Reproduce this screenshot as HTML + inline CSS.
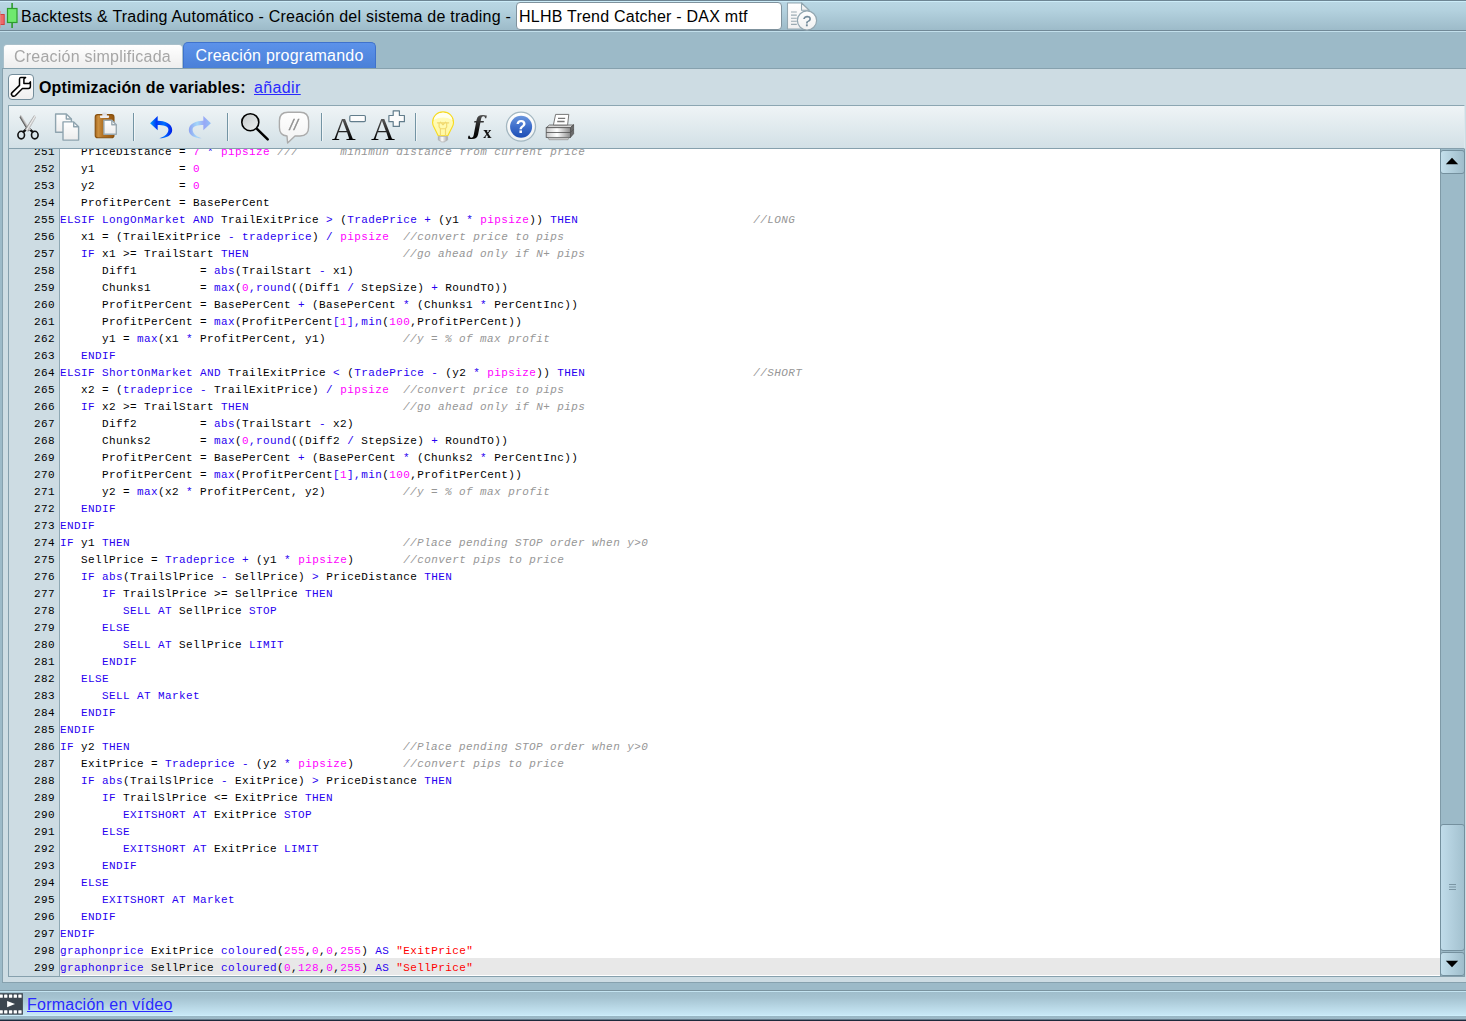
<!DOCTYPE html>
<html lang="es">
<head>
<meta charset="utf-8">
<title>Backtests &amp; Trading Automático</title>
<style>
html,body{margin:0;padding:0;}
body{width:1466px;height:1021px;overflow:hidden;position:relative;background:#9cbac8;font-family:"Liberation Sans",sans-serif;font-size:16px;color:#000;letter-spacing:0.23px;}
.abs{position:absolute;}
#titlebar{left:0;top:0;width:1466px;height:31px;background:linear-gradient(#bad7e4 0,#b4d2df 30%,#9dbbc9 100%);border-top:1px solid #6d8593;border-bottom:1px solid #718997;box-sizing:border-box;}
#titlebar .hl{left:0;top:0;width:100%;height:1px;background:#ccecf8;}
#title{left:21px;top:7px;font-size:16px;line-height:20px;white-space:nowrap;}
#name{left:516px;top:2px;width:266px;height:28px;box-sizing:border-box;border:1px solid #7f929d;border-radius:4px;background:#fff;font-size:16px;line-height:27px;padding-left:2px;white-space:nowrap;}
#band1hl{left:0;top:31px;width:1466px;height:1px;background:#c2dfeb;}
.tab{box-sizing:border-box;font-size:16px;white-space:nowrap;text-align:center;}
#tab1{left:3px;top:44px;width:180px;height:24px;background:linear-gradient(#ffffff,#eeeeee);border:1px solid #a9c0cb;border-bottom:none;border-radius:4px 4px 0 0;color:#a6a6a6;line-height:23px;text-align:left;padding-left:10px;will-change:transform;}
#tab2{left:183px;top:42px;width:193px;height:26px;background:linear-gradient(#5c92ea,#4a80d8);border:1px solid #3f72cc;border-bottom:none;border-radius:5px 5px 0 0;color:#fff;line-height:25px;}
#panel{left:2px;top:68px;width:1470px;height:915px;box-sizing:border-box;background:#cddce3;border:1px solid #86a1ae;}
#wrench{left:8px;top:74px;width:26px;height:26px;box-sizing:border-box;border:1px solid #748d9b;border-radius:4px;background:linear-gradient(#ffffff,#efefef);}
#opt{left:39px;top:78px;letter-spacing:0.15px;font-size:16px;font-weight:bold;line-height:20px;white-space:nowrap;}
#add{left:254px;top:78px;letter-spacing:.38px;font-size:16px;line-height:20px;color:#2a2aff;text-decoration:underline;white-space:nowrap;}
#toolbar{left:8px;top:105px;width:1457px;height:44px;box-sizing:border-box;border:1px solid #8ca6b2;border-bottom-color:#86a0ad;border-right-color:#dde8ed;background:linear-gradient(#eff4f6,#d2e0e6);}
.sep{width:1px;height:28px;top:113px;background:#7394a4;box-shadow:1px 0 0 rgba(255,255,255,.55);}
#editor{left:8px;top:149px;width:1457px;height:828px;box-sizing:border-box;border:1px solid #86a0ad;border-top:none;border-right:none;background:#fff;overflow:hidden;}
#gutter{left:0;top:0;width:50px;height:827px;background:#cddce3;border-right:1px solid #8ea8b4;}
.mono{font-family:"Liberation Mono",monospace;font-size:11px;letter-spacing:0.4px;line-height:21px;white-space:pre;}
#gutter .nums{left:0;top:-7px;width:46px;text-align:right;}
#gutter .nums div{height:17px;}
#code{left:51px;top:-7px;width:1381px;}
#code div{height:17px;}
#code .cur{background:#e8e8e8;}
.k{color:#2800f0;}
.m{color:#ff00ff;}
.c{color:#969696;font-style:italic;}
.s{color:#ff0000;}
#sb{left:1431px;top:0;width:25px;height:827px;box-sizing:border-box;background:#9cbac8;border-left:1px solid #7f9aa7;border-right:1px solid #7f9aa7;}
.sbtn{left:-1px;width:25px;box-sizing:border-box;border:1px solid #74909e;border-radius:3px;background:linear-gradient(90deg,#c3dfec,#9fbdcb);}
#band2{left:0;top:983px;width:1466px;height:7px;background:#9cbac8;}
#footer{left:0;top:990px;width:1466px;height:26px;box-sizing:border-box;border-top:1px solid #7a939f;border-bottom:1px solid #cdeefb;background:linear-gradient(#c4e4f1 0,#c4e4f1 1px,#9fbdcb 1px,#a6c4d2 30%,#c8e8f6 100%);}
#footend{left:0;top:1016px;width:1466px;height:5px;background:linear-gradient(#98b6c4 0,#9cbac8 2.6px,#6f8796 3.4px,#1c2a3c 4.2px,#1c2a3c 5px);}
#video{left:27px;top:995px;font-size:16px;line-height:20px;color:#2a2aff;text-decoration:underline;white-space:nowrap;}
</style>
</head>
<body>
<div id="titlebar" class="abs"><div class="hl abs"></div></div>
<div id="band1hl" class="abs"></div>
<svg class="abs" style="left:0px;top:0px;will-change:transform" width="20" height="31" viewBox="0 0 20 31" >
<rect x="-1" y="14.5" width="5.2" height="10" fill="#ee6868" stroke="#d04040" stroke-width="1"/>
<rect x="0" y="11" width="1" height="17" fill="#e08a8a" opacity=".6"/>
<rect x="11.3" y="3" width="1.6" height="25" fill="#2c9c2c"/>
<rect x="7.5" y="8.5" width="9.5" height="14" fill="#6fe96f" stroke="#2c9c2c" stroke-width="1.2"/>
</svg>
<div id="title" class="abs">Backtests &amp; Trading Automático - Creación del sistema de trading -</div>
<div id="name" class="abs">HLHB Trend Catcher - DAX mtf</div>
<svg class="abs" style="left:785px;top:0px;will-change:transform" width="36" height="33" viewBox="785 0 36 33" >
<defs><linearGradient id="dg" x1="0" y1="0" x2="0" y2="1"><stop offset="0" stop-color="#ffffff"/><stop offset="1" stop-color="#f0f0f0"/></linearGradient></defs>
<path d="M787.5 3 H801.5 L809 10.2 V29 H787.5 Z" fill="url(#dg)" stroke="#93a7b1" stroke-width="1.1" stroke-linejoin="round"/>
<path d="M801.5 3 V10.2 H809 Z" fill="#f2f2f2" stroke="#93a7b1" stroke-width="1.1" stroke-linejoin="round"/>
<path d="M791 12 H796.8 M791 15.1 H796.8 M791 18.2 H796.8 M791 21.3 H796.8 M791 24.4 H796.8" stroke="#9aaab2" stroke-width="1.1"/>
<circle cx="807" cy="20.5" r="9.6" fill="url(#dg)" stroke="#93a7b1" stroke-width="1.2"/>
<text x="807" y="26.4" text-anchor="middle" font-family="Liberation Sans, sans-serif" font-size="15.5" letter-spacing="0" fill="#6f8797" stroke="#6f8797" stroke-width=".3">?</text>
</svg>
<div id="tab1" class="abs tab">Creación simplificada</div>
<div id="tab2" class="abs tab">Creación programando</div>
<div id="panel" class="abs"></div>
<div id="wrench" class="abs"><svg class="abs" style="left:-1px;top:-1px" width="26" height="26" viewBox="0 0 26 26"><path d="M12.6 3.4 H17.6 L15.9 5 V9.6 H21.2 L22.4 7.9 V12.3 Q22.4 14.5 20.4 14.5 H14.4 L7.5 21.5 Q5.7 23.1 4.1 21.6 Q2.7 20.1 4.1 18.6 L11.5 11.4 V5.2 Q11.5 3.4 12.6 3.4 Z" fill="#fff" stroke="#000" stroke-width="1.5" stroke-linejoin="round"/></svg></div>
<div id="opt" class="abs">Optimización de variables:</div>
<div id="add" class="abs">añadir</div>
<div id="toolbar" class="abs"></div>
<div class="sep abs" style="left:133px"></div>
<div class="sep abs" style="left:227px"></div>
<div class="sep abs" style="left:321px"></div>
<div class="sep abs" style="left:415px"></div>
<svg class="abs" style="left:14px;top:110px;will-change:transform" width="30" height="34" viewBox="14 110 30 34" >
<defs>
<linearGradient id="bl1" x1="23.8" y1="124.4" x2="26.8" y2="122.6" gradientUnits="userSpaceOnUse"><stop offset="0" stop-color="#3c3c3c"/><stop offset=".5" stop-color="#b8b8b8"/><stop offset="1" stop-color="#f2f2f2"/></linearGradient>
<linearGradient id="bl2" x1="29.4" y1="122.5" x2="32.2" y2="124.2" gradientUnits="userSpaceOnUse"><stop offset="0" stop-color="#8a8a8a"/><stop offset=".45" stop-color="#f0f0f0"/><stop offset="1" stop-color="#a8a8a8"/></linearGradient>
</defs>
<path d="M23.4 131.8 L27 128.6 M32.6 131.8 L29 128.6" stroke="#111" stroke-width="2.3" stroke-linecap="round"/>
<path d="M20.2 115 L21.6 115.4 L31 129.6 L28 131.5 L19.7 117.4 Z" fill="url(#bl1)"/>
<path d="M35.4 115.2 L35.9 117.6 L27.8 131.4 L24.9 129.5 L34 115.6 Z" fill="url(#bl2)"/>
<ellipse cx="21.2" cy="135.1" rx="3.3" ry="3.8" fill="none" stroke="#111" stroke-width="1.6"/>
<ellipse cx="34.8" cy="135.1" rx="3.3" ry="3.8" fill="none" stroke="#111" stroke-width="1.6"/>
</svg><svg class="abs" style="left:52px;top:110px;will-change:transform" width="30" height="34" viewBox="52 110 30 34" >
<defs><linearGradient id="pg" x1="0" y1="0" x2="0" y2="1"><stop offset="0" stop-color="#ffffff"/><stop offset="1" stop-color="#ececec"/></linearGradient></defs>
<path d="M55.6 114 H66.3 L71.4 119 V132.2 H55.6 Z" fill="url(#pg)" stroke="#8fa4af" stroke-width="1.4" stroke-linejoin="round"/>
<path d="M66.3 114 V119 H71.4" fill="none" stroke="#8fa4af" stroke-width="1.4" stroke-linejoin="round"/>
<path d="M63 121.9 H73.7 L78.6 126.8 V140.1 H63 Z" fill="url(#pg)" stroke="#8fa4af" stroke-width="1.4" stroke-linejoin="round"/>
<path d="M73.7 121.9 V126.8 H78.6" fill="none" stroke="#8fa4af" stroke-width="1.4" stroke-linejoin="round"/>
</svg><svg class="abs" style="left:92px;top:110px;will-change:transform" width="28" height="32" viewBox="92 110 28 32" >
<defs>
<linearGradient id="cb" x1="0" y1="0" x2="1" y2="0"><stop offset="0" stop-color="#a4641a"/><stop offset=".16" stop-color="#cc9040"/><stop offset=".4" stop-color="#b27224"/><stop offset="1" stop-color="#96560e"/></linearGradient>
<linearGradient id="pg2" x1="0" y1="0" x2="0" y2="1"><stop offset="0" stop-color="#ffffff"/><stop offset="1" stop-color="#ececec"/></linearGradient>
</defs>
<rect x="95.2" y="114.6" width="18.8" height="23.2" rx="2.6" fill="url(#cb)" stroke="#87500f" stroke-width="1.1"/>
<rect x="102.3" y="112.6" width="4.6" height="4.4" rx="1.2" fill="#dedfe3"/>
<rect x="99.9" y="115.6" width="9.2" height="2.3" rx=".8" fill="#ededf0"/>
<path d="M103.9 120.3 H111.8 L116.3 124.7 V134.2 H103.9 Z" fill="url(#pg2)" stroke="#9aa9b1" stroke-width="1.4" stroke-linejoin="round"/>
<path d="M111.8 120.3 V124.7 H116.3" fill="none" stroke="#9aa9b1" stroke-width="1.4" stroke-linejoin="round"/>
</svg><svg class="abs" style="left:147px;top:112px;will-change:transform" width="70" height="30" viewBox="147 112 70 30" >
<defs>
<linearGradient id="ug" x1="150" y1="0" x2="173" y2="0" gradientUnits="userSpaceOnUse"><stop offset="0" stop-color="#00a4ff"/><stop offset=".28" stop-color="#0038f4"/><stop offset=".62" stop-color="#0070ff"/><stop offset=".8" stop-color="#0040f8"/><stop offset="1" stop-color="#0018e0"/></linearGradient>
<linearGradient id="rg" x1="150" y1="0" x2="173" y2="0" gradientUnits="userSpaceOnUse"><stop offset="0" stop-color="#92c0f8"/><stop offset=".3" stop-color="#98a8f6"/><stop offset=".6" stop-color="#a4d8f9"/><stop offset="1" stop-color="#8a9cf2"/></linearGradient>
</defs>
<path d="M150.1 123.2 L157.7 116.1 V120.7 C164 120.6 172.2 123.2 172.2 130 C172.2 135.4 166 138.2 159.4 138.3 C165 136.6 168.4 133.6 168.4 129.6 C168.4 126.2 163 125.1 157.7 125.1 V130.3 Z" fill="url(#ug)"/>
<path d="M150.1 123.2 L157.7 116.1 V120.7 C164 120.6 172.2 123.2 172.2 130 C172.2 135.4 166 138.2 159.4 138.3 C165 136.6 168.4 133.6 168.4 129.6 C168.4 126.2 163 125.1 157.7 125.1 V130.3 Z" fill="url(#rg)" transform="translate(361 0) scale(-1 1)"/>
</svg><svg class="abs" style="left:238px;top:110px;will-change:transform" width="34" height="34" viewBox="238 110 34 34" >
<defs><linearGradient id="mg" x1="0" y1="0" x2="1" y2="1"><stop offset="0" stop-color="#c4c9ca"/><stop offset="1" stop-color="#edf1f2"/></linearGradient></defs>
<path d="M257.2 129.2 L267.7 139.4" stroke="#000" stroke-width="2.5" stroke-linecap="round"/>
<circle cx="250.3" cy="122.2" r="8.5" fill="url(#mg)" stroke="#000" stroke-width="1.6"/>
</svg><svg class="abs" style="left:276px;top:109px;will-change:transform" width="36" height="36" viewBox="276 109 36 36" >
<defs><linearGradient id="bg" x1="0" y1="0" x2="0" y2="1"><stop offset="0" stop-color="#ffffff"/><stop offset="1" stop-color="#f2f2f2"/></linearGradient></defs>
<path d="M288 112.2 H300 Q308.6 112.2 308.6 120.8 V127.3 Q308.6 136 300 136 H295 L287.6 143 L287 136 Q279.4 135.6 279.4 127.3 V120.8 Q279.4 112.2 288 112.2 Z" fill="url(#bg)" stroke="#ababab" stroke-width="1.4" stroke-linejoin="round"/>
<text x="289.4" y="129.6" font-family="Liberation Sans, sans-serif" font-style="italic" font-size="14.5" letter-spacing="0.6" fill="#8c8c8c" stroke="#8c8c8c" stroke-width=".35">//</text>
</svg><svg class="abs" style="left:328px;top:108px;will-change:transform" width="42" height="36" viewBox="328 108 42 36" >
<defs><linearGradient id="ag" x1="0" y1="-21" x2="0" y2="0" gradientUnits="userSpaceOnUse"><stop offset="0" stop-color="#5a5a5a"/><stop offset="1" stop-color="#000"/></linearGradient></defs>
<text transform="translate(331.7 139.8) scale(1.055 1)" font-family="Liberation Serif, serif" font-size="31.5" letter-spacing="0" fill="url(#ag)">A</text>
<rect x="349.8" y="115.5" width="15.6" height="6.2" rx="1.2" fill="#fcfcfc" stroke="#627d8c" stroke-width="1.2"/>
</svg><svg class="abs" style="left:368px;top:108px;will-change:transform" width="40" height="36" viewBox="368 108 40 36" >
<text transform="translate(371 139.8) scale(1.055 1)" font-family="Liberation Serif, serif" font-size="31.5" letter-spacing="0" fill="url(#ag)">A</text>
<path d="M393.2 110.8 H399.4 V115.5 H404.4 V121.7 H399.4 V126.4 H393.2 V121.7 H388.9 V115.5 H393.2 Z" fill="#fcfcfc" stroke="#627d8c" stroke-width="1.2" stroke-linejoin="round"/>
</svg><svg class="abs" style="left:428px;top:108px;will-change:transform" width="30" height="36" viewBox="428 108 30 36" >
<defs>
<linearGradient id="bbg" x1="0" y1="0" x2="0" y2="1"><stop offset="0" stop-color="#fffde0"/><stop offset=".3" stop-color="#fffbb8"/><stop offset="1" stop-color="#fff8a2"/></linearGradient>
<linearGradient id="bsg" x1="0" y1="0" x2="1" y2="0"><stop offset="0" stop-color="#a6a6a6"/><stop offset=".4" stop-color="#ffffff"/><stop offset="1" stop-color="#a2a2a2"/></linearGradient>
</defs>
<path d="M438.2 135.8 L433.9 127 C432.9 125 432.6 123.8 432.6 122.4 C432.6 116.6 437.2 111.9 443.05 111.9 C448.9 111.9 453.5 116.6 453.5 122.4 C453.5 123.8 453.2 125 452.2 127 L447.8 135.8 Z" fill="url(#bbg)" stroke="#f7da1e" stroke-width="1.1" stroke-linejoin="round"/>
<path d="M433.6 120 Q443 115.2 452.5 120 Q451 113 443 112.7 Q435.2 113 433.6 120 Z" fill="#fffff2" opacity=".92"/>
<path d="M437.4 122.8 H448.7 M439.1 122.6 V127 L440.4 128.6 V135.4 M446.7 122.6 V127 L445.5 128.6 V135.4 M440.5 122.2 L443 124.8 L445.5 122.2 M440.4 128.7 H445.5" fill="none" stroke="#f1d86e" stroke-width="1.15" stroke-linejoin="round" stroke-linecap="round"/>
<path d="M438.3 136.5 H447.6 V139.6 Q447.6 140.8 445.4 140.9 L444.8 141.9 H441.2 L440.6 140.9 Q438.3 140.8 438.3 139.6 Z" fill="url(#bsg)" stroke="#b0b0b0" stroke-width=".7"/>
</svg><svg class="abs" style="left:466px;top:108px;will-change:transform" width="30" height="36" viewBox="466 108 30 36" >
<defs><linearGradient id="fg" x1="0" y1="114" x2="0" y2="140" gradientUnits="userSpaceOnUse"><stop offset="0" stop-color="#555"/><stop offset=".6" stop-color="#111"/><stop offset="1" stop-color="#000"/></linearGradient></defs>
<text x="472.6" y="133.7" font-family="DejaVu Serif, serif" font-style="italic" font-weight="bold" font-size="25" letter-spacing="0" fill="url(#fg)">ƒ</text>
<text x="483.2" y="137.7" font-family="Liberation Serif, serif" font-weight="bold" font-size="16.5" letter-spacing="0" fill="#111">x</text>
</svg><svg class="abs" style="left:504px;top:109px;will-change:transform" width="34" height="35" viewBox="504 109 34 35" >
<defs>
<linearGradient id="hg" x1="0" y1="0" x2="0" y2="1"><stop offset="0" stop-color="#6a96de"/><stop offset=".5" stop-color="#3e6ecb"/><stop offset="1" stop-color="#1d4db4"/></linearGradient>
<linearGradient id="ho" x1="0" y1="0" x2="0" y2="1"><stop offset="0" stop-color="#ffffff"/><stop offset="1" stop-color="#eef1f2"/></linearGradient>
</defs>
<circle cx="521" cy="126.6" r="14.5" fill="url(#ho)" stroke="#a3b7c1" stroke-width="1.3"/>
<circle cx="521.1" cy="126.8" r="11" fill="url(#hg)"/>
<text x="521" y="133.2" text-anchor="middle" font-family="Liberation Sans, sans-serif" font-weight="bold" font-size="17.5" letter-spacing="0" fill="#fff">?</text>
</svg><svg class="abs" style="left:544px;top:110px;will-change:transform" width="34" height="34" viewBox="544 110 34 34" >
<defs>
<linearGradient id="pf" x1="0" y1="0" x2="1" y2="0"><stop offset="0" stop-color="#c9c9c9"/><stop offset=".45" stop-color="#ffffff"/><stop offset="1" stop-color="#8c8c8c"/></linearGradient>
</defs>
<path d="M549.4 125 H573.6 L570.4 127.7 H546.2 Z" fill="#d6d6d6" stroke="#6a6a6a" stroke-width=".9" stroke-linejoin="round"/>
<path d="M555.6 114.4 H568.8 L567.6 125 H553.4 Z" fill="#fff" stroke="#777" stroke-width="1" stroke-linejoin="round"/>
<path d="M558 118.4 H565.2 M557.2 121.5 H564.6" stroke="#777" stroke-width="1.3"/>
<path d="M570.4 127.7 L573.6 124.6 V133.8 L570.4 137.4 Z" fill="#6a6a6a" stroke="#4a4a4a" stroke-width=".7" stroke-linejoin="round"/>
<rect x="546.2" y="127.7" width="24.2" height="9.7" fill="url(#pf)" stroke="#555" stroke-width=".85"/>
<path d="M546.2 132.5 H570.4 M570.4 132.5 L573.6 129.2" stroke="#555" stroke-width=".85"/>
<path d="M548 137.9 H569 L568 139.7 H549 Z" fill="#dcdcdc" stroke="#8a8a8a" stroke-width=".7"/>
</svg>
<div id="editor" class="abs">
<div id="gutter" class="abs"><div class="nums abs mono"><div>251</div><div>252</div><div>253</div><div>254</div><div>255</div><div>256</div><div>257</div><div>258</div><div>259</div><div>260</div><div>261</div><div>262</div><div>263</div><div>264</div><div>265</div><div>266</div><div>267</div><div>268</div><div>269</div><div>270</div><div>271</div><div>272</div><div>273</div><div>274</div><div>275</div><div>276</div><div>277</div><div>278</div><div>279</div><div>280</div><div>281</div><div>282</div><div>283</div><div>284</div><div>285</div><div>286</div><div>287</div><div>288</div><div>289</div><div>290</div><div>291</div><div>292</div><div>293</div><div>294</div><div>295</div><div>296</div><div>297</div><div>298</div><div>299</div></div></div>
<div id="code" class="abs mono"><div>   PriceDistance = <span class="m">7</span> <span class="k">*</span> <span class="m">pipsize</span> <i class="c">///      minimun distance from current price</i></div><div>   y1            = <span class="m">0</span></div><div>   y2            = <span class="m">0</span></div><div>   ProfitPerCent = BasePerCent</div><div><span class="k">ELSIF</span> <span class="k">LongOnMarket</span> <span class="k">AND</span> TrailExitPrice <span class="k">&gt;</span> (<span class="k">TradePrice</span> <span class="k">+</span> (y1 <span class="k">*</span> <span class="m">pipsize</span>)) <span class="k">THEN</span>                         <i class="c">//LONG</i></div><div>   x1 = (TrailExitPrice <span class="k">-</span> <span class="k">tradeprice</span>) <span class="k">/</span> <span class="m">pipsize</span>  <i class="c">//convert price to pips</i></div><div>   <span class="k">IF</span> x1 &gt;= TrailStart <span class="k">THEN</span>                      <i class="c">//go ahead only if N+ pips</i></div><div>      Diff1         = <span class="k">abs</span>(TrailStart <span class="k">-</span> x1)</div><div>      Chunks1       = <span class="k">max</span>(<span class="m">0</span><span class="k">,</span><span class="k">round</span>((Diff1 <span class="k">/</span> StepSize) <span class="k">+</span> RoundTO))</div><div>      ProfitPerCent = BasePerCent <span class="k">+</span> (BasePerCent <span class="k">*</span> (Chunks1 <span class="k">*</span> PerCentInc))</div><div>      ProfitPerCent = <span class="k">max</span>(ProfitPerCent<span class="k">[</span><span class="m">1</span><span class="k">]</span><span class="k">,</span><span class="k">min</span>(<span class="m">100</span>,ProfitPerCent))</div><div>      y1 = <span class="k">max</span>(x1 <span class="k">*</span> ProfitPerCent, y1)           <i class="c">//y = % of max profit</i></div><div>   <span class="k">ENDIF</span></div><div><span class="k">ELSIF</span> <span class="k">ShortOnMarket</span> <span class="k">AND</span> TrailExitPrice <span class="k">&lt;</span> (<span class="k">TradePrice</span> <span class="k">-</span> (y2 <span class="k">*</span> <span class="m">pipsize</span>)) <span class="k">THEN</span>                        <i class="c">//SHORT</i></div><div>   x2 = (<span class="k">tradeprice</span> <span class="k">-</span> TrailExitPrice) <span class="k">/</span> <span class="m">pipsize</span>  <i class="c">//convert price to pips</i></div><div>   <span class="k">IF</span> x2 &gt;= TrailStart <span class="k">THEN</span>                      <i class="c">//go ahead only if N+ pips</i></div><div>      Diff2         = <span class="k">abs</span>(TrailStart <span class="k">-</span> x2)</div><div>      Chunks2       = <span class="k">max</span>(<span class="m">0</span><span class="k">,</span><span class="k">round</span>((Diff2 <span class="k">/</span> StepSize) <span class="k">+</span> RoundTO))</div><div>      ProfitPerCent = BasePerCent <span class="k">+</span> (BasePerCent <span class="k">*</span> (Chunks2 <span class="k">*</span> PerCentInc))</div><div>      ProfitPerCent = <span class="k">max</span>(ProfitPerCent<span class="k">[</span><span class="m">1</span><span class="k">]</span><span class="k">,</span><span class="k">min</span>(<span class="m">100</span>,ProfitPerCent))</div><div>      y2 = <span class="k">max</span>(x2 <span class="k">*</span> ProfitPerCent, y2)           <i class="c">//y = % of max profit</i></div><div>   <span class="k">ENDIF</span></div><div><span class="k">ENDIF</span></div><div><span class="k">IF</span> y1 <span class="k">THEN</span>                                       <i class="c">//Place pending STOP order when y&gt;0</i></div><div>   SellPrice = <span class="k">Tradeprice</span> <span class="k">+</span> (y1 <span class="k">*</span> <span class="m">pipsize</span>)       <i class="c">//convert pips to price</i></div><div>   <span class="k">IF</span> <span class="k">abs</span>(TrailSlPrice <span class="k">-</span> SellPrice) <span class="k">&gt;</span> PriceDistance <span class="k">THEN</span></div><div>      <span class="k">IF</span> TrailSlPrice &gt;= SellPrice <span class="k">THEN</span></div><div>         <span class="k">SELL</span> <span class="k">AT</span> SellPrice <span class="k">STOP</span></div><div>      <span class="k">ELSE</span></div><div>         <span class="k">SELL</span> <span class="k">AT</span> SellPrice <span class="k">LIMIT</span></div><div>      <span class="k">ENDIF</span></div><div>   <span class="k">ELSE</span></div><div>      <span class="k">SELL</span> <span class="k">AT</span> <span class="k">Market</span></div><div>   <span class="k">ENDIF</span></div><div><span class="k">ENDIF</span></div><div><span class="k">IF</span> y2 <span class="k">THEN</span>                                       <i class="c">//Place pending STOP order when y&gt;0</i></div><div>   ExitPrice = <span class="k">Tradeprice</span> <span class="k">-</span> (y2 <span class="k">*</span> <span class="m">pipsize</span>)       <i class="c">//convert pips to price</i></div><div>   <span class="k">IF</span> <span class="k">abs</span>(TrailSlPrice <span class="k">-</span> ExitPrice) <span class="k">&gt;</span> PriceDistance <span class="k">THEN</span></div><div>      <span class="k">IF</span> TrailSlPrice &lt;= ExitPrice <span class="k">THEN</span></div><div>         <span class="k">EXITSHORT</span> <span class="k">AT</span> ExitPrice <span class="k">STOP</span></div><div>      <span class="k">ELSE</span></div><div>         <span class="k">EXITSHORT</span> <span class="k">AT</span> ExitPrice <span class="k">LIMIT</span></div><div>      <span class="k">ENDIF</span></div><div>   <span class="k">ELSE</span></div><div>      <span class="k">EXITSHORT</span> <span class="k">AT</span> <span class="k">Market</span></div><div>   <span class="k">ENDIF</span></div><div><span class="k">ENDIF</span></div><div><span class="k">graphonprice</span> ExitPrice <span class="k">coloured</span>(<span class="m">255</span>,<span class="m">0</span>,<span class="m">0</span>,<span class="m">255</span>) <span class="k">AS</span> <span class="s">&quot;ExitPrice&quot;</span></div><div class="cur"><span class="k">graphonprice</span> SellPrice <span class="k">coloured</span>(<span class="m">0</span>,<span class="m">128</span>,<span class="m">0</span>,<span class="m">255</span>) <span class="k">AS</span> <span class="s">&quot;SellPrice&quot;</span></div></div>
<div id="sb" class="abs">
<div class="sbtn abs" style="top:1px;height:24px;"><svg class="abs" style="left:4px;top:6px" width="14" height="8" viewBox="0 0 14 8"><path d="M0.8 7.3 L7 0.7 L13.2 7.3 Z" fill="#000"/></svg></div>
<div class="sbtn abs" style="top:675px;height:127px;background:linear-gradient(90deg,#c0dcea,#a3c1cf);"><svg class="abs" style="left:8px;top:59px" width="7" height="7" viewBox="0 0 7 7"><path d="M0 0.5H7M0 3H7M0 5.5H7" stroke="#7a95a3" stroke-width="1"/></svg></div>
<div class="sbtn abs" style="top:803px;height:24px;"><svg class="abs" style="left:4px;top:7px" width="14" height="8" viewBox="0 0 14 8"><path d="M0.8 0.7 L7 7.3 L13.2 0.7 Z" fill="#000"/></svg></div>
</div>
</div>
<div id="band2" class="abs"></div>
<div id="footer" class="abs"></div>
<div id="footend" class="abs"></div>
<svg class="abs" style="left:0px;top:992px;will-change:transform" width="24" height="24" viewBox="0 992 24 24" ><rect x="-1" y="993.2" width="23.9" height="21.5" fill="#3c4650"/><rect x="-0.5" y="994.4" width="3.3" height="3.3" rx=".5" fill="#fff"/><rect x="4.1" y="994.4" width="3.3" height="3.3" rx=".5" fill="#fff"/><rect x="8.95" y="994.4" width="3.3" height="3.3" rx=".5" fill="#fff"/><rect x="13.65" y="994.4" width="3.3" height="3.3" rx=".5" fill="#fff"/><rect x="18.3" y="994.4" width="3.3" height="3.3" rx=".5" fill="#fff"/><rect x="-0.5" y="1010.2" width="3.3" height="3.3" rx=".5" fill="#fff"/><rect x="4.1" y="1010.2" width="3.3" height="3.3" rx=".5" fill="#fff"/><rect x="8.95" y="1010.2" width="3.3" height="3.3" rx=".5" fill="#fff"/><rect x="13.65" y="1010.2" width="3.3" height="3.3" rx=".5" fill="#fff"/><rect x="18.3" y="1010.2" width="3.3" height="3.3" rx=".5" fill="#fff"/><path d="M7.1 1001 L15 1004.1 L7.1 1007.2 Z" fill="#fff"/></svg>
<div id="video" class="abs">Formación en vídeo</div>
</body>
</html>
